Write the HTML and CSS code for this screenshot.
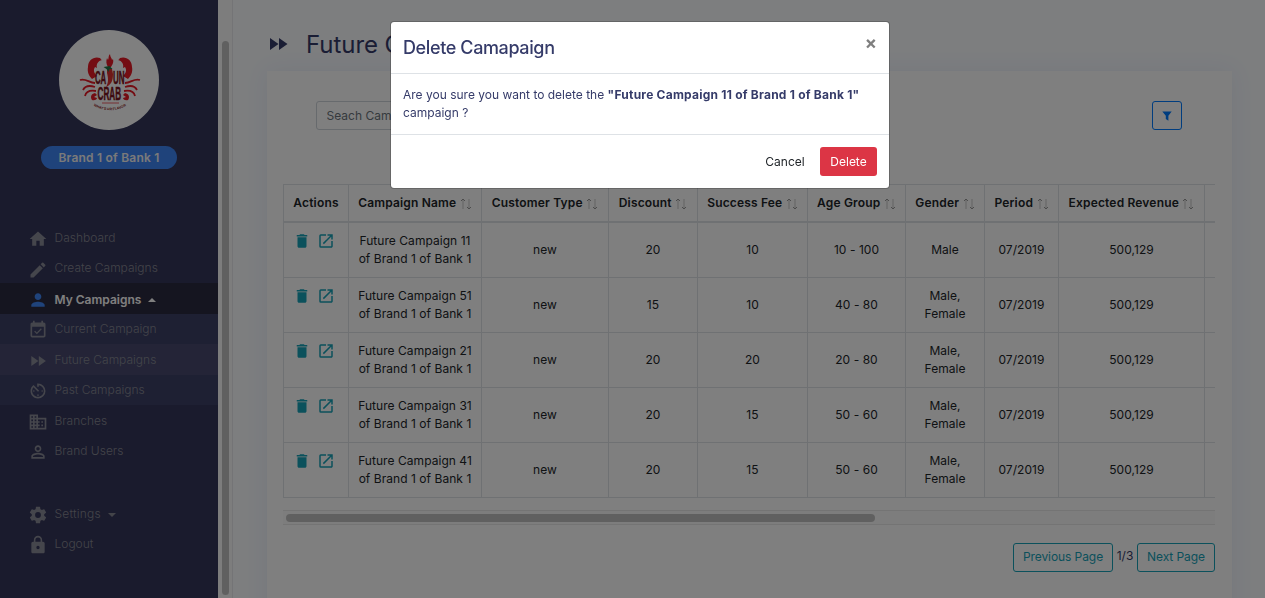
FILE: index.html
```html
<!DOCTYPE html>
<html lang="en">
<head>
<meta charset="utf-8">
<title>Future Campaigns</title>
<link rel="stylesheet" href="styles.css">
</head>
<body>
<svg class="sprite" aria-hidden="true">
  <symbol id="home" viewBox="0 0 24 24"><path d="M10 20v-6h4v6h5v-8h3L12 3 2 12h3v8z"/></symbol>
  <symbol id="edit" viewBox="0 0 24 24"><path d="M3 17.25V21h3.75L17.81 9.94l-3.75-3.75L3 17.25zM20.71 7.04a1 1 0 0 0 0-1.41l-2.34-2.34a1 1 0 0 0-1.41 0l-1.83 1.83 3.75 3.75 1.83-1.83z"/></symbol>
  <symbol id="person" viewBox="0 0 24 24"><path d="M12 12c2.21 0 4-1.79 4-4s-1.79-4-4-4-4 1.79-4 4 1.79 4 4 4zm0 2c-2.67 0-8 1.34-8 4v2h16v-2c0-2.66-5.33-4-8-4z"/></symbol>
  <symbol id="event" viewBox="0 0 24 24"><path d="M16.53 11.06L15.47 10l-4.88 4.88-2.12-2.12-1.06 1.06L10.59 17l5.94-5.94zM19 3h-1V1h-2v2H8V1H6v2H5c-1.11 0-2 .9-2 2v14a2 2 0 0 0 2 2h14c1.1 0 2-.9 2-2V5c0-1.100-.9-2-2-2zm0 16H5V8h14v11z"/></symbol>
  <symbol id="forward" viewBox="0 0 24 24"><path d="M4 18l8.500-6L4 6v12zm9-12v12l8.500-6L13 6z"/></symbol>
  <symbol id="timer" viewBox="0 0 24 24"><path d="M11 17c0 .55.45 1 1 1s1-.45 1-1-.45-1-1-1-1 .45-1 1zm0-14v4h2V5.080c3.390.49 6 3.390 6 6.920 0 3.870-3.130 7-7 7s-7-3.130-7-7c0-1.680.59-3.220 1.580-4.420L12 13l1.410-1.410-6.800-6.800v.02C4.420 6.450 3 9.050 3 12c0 4.970 4.020 9 9 9a9 9 0 0 0 0-18h-1zm7 9c0-.55-.45-1-1-1s-1 .45-1 1 .45 1 1 1 1-.45 1-1zM6 12c0 .55.45 1 1 1s1-.45 1-1-.45-1-1-1-1 .45-1 1z"/></symbol>
  <symbol id="building" viewBox="0 0 24 24"><path d="M12 7V3H2v18h20V7H12zM6 19H4v-2h2v2zm0-4H4v-2h2v2zm0-4H4V9h2v2zm0-4H4V5h2v2zm4 12H8v-2h2v2zm0-4H8v-2h2v2zm0-4H8V9h2v2zm0-4H8V5h2v2zm10 12h-8v-2h2v-2h-2v-2h2v-2h-2V9h8v10zm-2-8h-2v2h2v-2zm0 4h-2v2h2v-2z"/></symbol>
  <symbol id="person-outline" viewBox="0 0 24 24"><path d="M12 5.900a2.100 2.100 0 1 1 0 4.200 2.100 2.100 0 0 1 0-4.200m0 9c2.970 0 6.100 1.460 6.100 2.100v1.100H5.900V17c0-.64 3.130-2.100 6.100-2.100M12 4C9.790 4 8 5.790 8 8s1.790 4 4 4 4-1.790 4-4-1.790-4-4-4zm0 9c-2.670 0-8 1.340-8 4v3h16v-3c0-2.660-5.330-4-8-4z"/></symbol>
  <symbol id="gear" viewBox="0 0 24 24"><path d="M19.430 12.980c.04-.32.07-.64.07-.98s-.03-.66-.07-.98l2.110-1.650c.19-.15.24-.42.12-.64l-2-3.460c-.12-.22-.39-.3-.61-.22l-2.490 1c-.52-.4-1.080-.73-1.690-.98l-.38-2.650A.49.49 0 0 0 14 2h-4c-.25 0-.46.18-.49.42l-.38 2.650c-.61.25-1.170.59-1.690.98l-2.490-1c-.23-.09-.49 0-.61.22l-2 3.460c-.13.22-.07.49.12.64l2.110 1.650c-.04.32-.07.65-.07.98s.03.66.07.98l-2.110 1.650c-.19.15-.24.42-.12.64l2 3.460c.12.22.39.3.61.22l2.490-1c.52.4 1.080.73 1.690.98l.38 2.650c.03.24.24.42.49.42h4c.25 0 .46-.18.49-.42l.38-2.650c.61-.25 1.170-.59 1.690-.98l2.490 1c.23.09.49 0 .61-.22l2-3.460c.12-.22.07-.49-.12-.64l-2.110-1.650zM12 15.500a3.500 3.500 0 1 1 0-7 3.500 3.500 0 0 1 0 7z"/></symbol>
  <symbol id="lock" viewBox="0 0 24 24"><path d="M18 8h-1V6c0-2.760-2.240-5-5-5S7 3.240 7 6v2H6c-1.100 0-2 .9-2 2v10c0 1.100.9 2 2 2h12c1.100 0 2-.9 2-2V10c0-1.100-.9-2-2-2zm-6 9a2 2 0 1 1 0-4 2 2 0 0 1 0 4zm3.100-9H8.900V6a3.100 3.100 0 0 1 6.200 0v2z"/></symbol>
  <symbol id="trash" viewBox="0 0 24 24"><path d="M6 19c0 1.100.9 2 2 2h8c1.100 0 2-.9 2-2V7H6v12zM19 4h-3.500l-1-1h-5l-1 1H5v2h14V4z"/></symbol>
  <symbol id="open" viewBox="0 0 24 24"><path d="M19 19H5V5h7V3H5a2 2 0 0 0-2 2v14a2 2 0 0 0 2 2h14c1.100 0 2-.9 2-2v-7h-2v7zM14 3v2h3.590l-9.830 9.830 1.410 1.410L19 6.410V10h2V3h-7z"/></symbol>
  <symbol id="sort" viewBox="0 0 12 12"><g fill="none" stroke="currentColor"><path d="M3 11V1.500M9 1v9.500" opacity=".55"/><path d="M1 3L3 1l2 2M7 9l2 2 2-2"/></g></symbol>
</svg>

<div class="app">
  <aside class="sidebar">
    <div class="logo">
      <svg viewBox="0 0 100 100" width="100" height="100">
        <g fill="#e81a26">
          <path d="M41 28c-6-2-12 2-12 9-1 5 1 9 4 12l5-3c-3-3-4-6-2-9l2 1c-1-4 1-7 5-8-1 0-1-1-2-2z"/>
          <path d="M61 28c6-2 12 2 12 9 1 5-1 9-4 12l-5-3c3-3 4-6 2-9l-2 1c1-4-1-7-5-8 1 0 1-1 2-2z"/>
          <path d="M51 24c0 3 2 4 2 6l1-1c1 4-1 6-2 8h-3c-2-3-2-6-1-9l1 2c1-2 0-4 2-6z"/>
          <path d="M36 63c-4 1-5 4-3 7 3 1 5-1 5-2l-3-1 3-2zM66 63c4 1 5 4 3 7-3 1-5-1-5-2l3-1-3-2z"/>
        </g>
        <g fill="none" stroke="#e81a26" stroke-width="1.800">
          <path d="M36 53c-6 0-9-5-15-3M36 57c-6-2-10-1-12 3M37 61c-6-1-10 1-11 5"/>
          <path d="M66 53c6 0 9-5 15-3M66 57c6-2 10-1 12 3M65 61c6-1 10 1 11 5"/>
          <path d="M43 73h17" stroke-width=".7"/>
        </g>
        <g class="logo-word">
          <text transform="translate(36 53.700) scale(.41 1)">CA</text>
          <text transform="translate(54 53.700) scale(.42 1)">UN</text>
          <text transform="translate(38.500 69.500) scale(.43 1)">CRAB</text>
        </g>
        <path d="M48 39h5l1 5c0 7-2 11-7 13 3-5 2-10 1-14z" fill="#dd3030"/>
        <path d="M44.500 37l6-1 3 3-3 0-1 3-2-3z" fill="#237545"/>
        <path id="arc" d="M35.500 73.500Q51 82 66.500 73.500" fill="none"/>
        <text class="logo-tag" dy="2.500"><textPath href="#arc" textLength="32">WHAT'S UR FLAVOR</textPath></text>
      </svg>
    </div>
    <div class="brand">Brand 1 of Bank 1</div>
    <nav class="menu">
      <a class="item"><svg><use href="#home"/></svg>Dashboard</a>
      <a class="item low"><svg><use href="#edit"/></svg>Create Campaigns</a>
      <a class="item open"><svg><use href="#person"/></svg>My Campaigns<i class="caret up"></i></a>
      <a class="item sub"><svg><use href="#event"/></svg>Current Campaign</a>
      <a class="item sub current"><svg><use href="#forward"/></svg>Future Campaigns</a>
      <a class="item sub"><svg><use href="#timer"/></svg>Past Campaigns</a>
      <a class="item tall"><svg><use href="#building"/></svg>Branches</a>
      <a class="item"><svg><use href="#person-outline"/></svg>Brand Users</a>
      <a class="item spaced"><svg><use href="#gear"/></svg>Settings<i class="caret"></i></a>
      <a class="item"><svg><use href="#lock"/></svg>Logout</a>
    </nav>
  </aside>
  <div class="side-scroll"><div class="side-thumb"></div></div>
  <main class="main">
    <h1 class="title"><svg><use href="#forward"/></svg>Future Campaigns</h1>
    <section class="card">
      <div class="tools">
        <input class="search" placeholder="Seach Campaign">
        <button class="filter" aria-label="Filter"><svg viewBox="0 0 10 10"><path d="M.3.500h9.400L6.400 4.800v4.900L3.800 8V4.800z"/></svg></button>
      </div>
      <div class="table-wrap">
        <table>
          <colgroup><col class="c1"><col class="c2"><col class="c3"><col class="c4"><col class="c5"><col class="c6"><col class="c7"><col class="c8"><col class="c9"><col class="c10"></colgroup>
          <thead><tr><th>Actions</th><th>Campaign Name<svg><use href="#sort"/></svg></th><th>Customer Type<svg><use href="#sort"/></svg></th><th>Discount<svg><use href="#sort"/></svg></th><th>Success Fee<svg><use href="#sort"/></svg></th><th>Age Group<svg><use href="#sort"/></svg></th><th>Gender<svg><use href="#sort"/></svg></th><th>Period<svg><use href="#sort"/></svg></th><th>Expected Revenue<svg><use href="#sort"/></svg></th><th></th></tr></thead>
          <tbody>
            <tr><td class="actions"><svg><use href="#trash"/></svg><svg><use href="#open"/></svg></td><td>Future Campaign 11<br>of Brand 1 of Bank 1</td><td>new</td><td>20</td><td>10</td><td>10 - 100</td><td>Male</td><td>07/2019</td><td>500,129</td><td></td></tr>
            <tr><td class="actions"><svg><use href="#trash"/></svg><svg><use href="#open"/></svg></td><td>Future Campaign 51<br>of Brand 1 of Bank 1</td><td>new</td><td>15</td><td>10</td><td>40 - 80</td><td>Male,<br>Female</td><td>07/2019</td><td>500,129</td><td></td></tr>
            <tr><td class="actions"><svg><use href="#trash"/></svg><svg><use href="#open"/></svg></td><td>Future Campaign 21<br>of Brand 1 of Bank 1</td><td>new</td><td>20</td><td>20</td><td>20 - 80</td><td>Male,<br>Female</td><td>07/2019</td><td>500,129</td><td></td></tr>
            <tr><td class="actions"><svg><use href="#trash"/></svg><svg><use href="#open"/></svg></td><td>Future Campaign 31<br>of Brand 1 of Bank 1</td><td>new</td><td>20</td><td>15</td><td>50 - 60</td><td>Male,<br>Female</td><td>07/2019</td><td>500,129</td><td></td></tr>
            <tr><td class="actions"><svg><use href="#trash"/></svg><svg><use href="#open"/></svg></td><td>Future Campaign 41<br>of Brand 1 of Bank 1</td><td>new</td><td>20</td><td>15</td><td>50 - 60</td><td>Male,<br>Female</td><td>07/2019</td><td>500,129</td><td></td></tr>
          </tbody>
        </table>
      </div>
      <div class="x-scroll"><div class="x-thumb"></div></div>
      <div class="pager"><button class="page-btn prev">Previous Page</button><span>1/3</span><button class="page-btn next">Next Page</button></div>
    </section>
  </main>
</div>

<div class="backdrop">
  <div class="modal" role="dialog">
    <header class="modal-head"><h2>Delete Camapaign</h2><span class="close">×</span></header>
    <div class="modal-body">Are you sure you want to delete the <b>"Future Campaign 11 of Brand 1 of Bank 1"</b><br>campaign ?</div>
    <footer class="modal-foot"><button class="cancel">Cancel</button><button class="delete">Delete</button></footer>
  </div>
</div>
</body>
</html>
```
FILE: styles.css
```css
* { box-sizing: border-box; }
html, body { height: 100%; overflow: hidden; }
body {
  margin: 0;
  font: 12px/18px Inter, "Liberation Sans", sans-serif;
  letter-spacing: 0;
  color: #353b69;
}
button, input { font: inherit; letter-spacing: inherit; }
svg { fill: currentColor; }
.sprite { position: absolute; width: 0; height: 0; }

.app { display: flex; height: 598px; overflow: hidden; }

/* Sidebar */
.sidebar { width: 218px; flex: none; background: #34365a; padding-top: 30px; }
.logo { width: 100px; height: 100px; margin: 0 auto; border-radius: 50%; background: #fff; overflow: hidden; }
.logo svg { display: block; }
.logo-word { font: bold 19px "Liberation Sans", sans-serif; fill: #7b1420; stroke: #7b1420; stroke-width: .5px; }
.logo-tag { font: bold 3.500px "Liberation Sans", sans-serif; fill: #8a1822; }
.brand {
  width: 136px; height: 23px; margin: 16px auto 54px; border-radius: 12px;
  background: #3f86f7; color: #f4f4f4; font-weight: 600; line-height: 23px; text-align: center; letter-spacing: .22px;
}
.item { display: flex; align-items: center; height: 30px; padding-left: 28px; color: #878893; font-weight: 300; }
.item svg { width: 20px; height: 20px; margin: 2px 6.500px 0 0; color: #8b8c98; }
.item.low svg { margin-top: 4px; }
.item.open { height: 31px; padding-top: 2px; background: #2b2b41; color: #fff; font-weight: 600; }
.item.open svg { margin-top: 0; color: #3f86f7; }
.item.sub { background: #3c4067; }
.item.current { height: 31px; background: #48496f; }
.item.tall { height: 31px; }
.item.spaced { margin-top: 33px; letter-spacing: .2px; }
.caret { margin: 2px 0 0 7px; border: 4px solid transparent; border-bottom: 0; border-top-color: currentColor; }
.caret.up { margin-top: 0; border-bottom: 4px solid currentColor; border-top: 0; }

.side-scroll { width: 15px; flex: none; padding: 41px 3px 3px 4px; background: #fafafa; border-right: 1px solid #e9e9ed; }
.side-thumb { height: 554px; border-radius: 4px; background: #c1c1c1; }

/* Page content */
.main { flex: 1; min-width: 0; padding: 31px 33px 0 34px; background: #fafcff; }
.title { display: flex; align-items: center; height: 28px; margin: 0 0 12px; font-size: 24px; font-weight: 400; letter-spacing: -.05px; white-space: nowrap; }
.title svg { width: 24px; height: 24px; margin: -2px 16px 0 -1px; }
.card { height: 560px; padding: 30px 17px 0 16px; background: #fff; box-shadow: 0 0 22px #e9effa; }
.tools { display: flex; justify-content: space-between; padding: 0 33px; height: 83px; align-items: flex-start; }
.search { width: 240px; height: 29px; padding: 0 9.500px; border: 1px solid #ced4da; border-radius: 3px; background: #fff; }
.search::placeholder { color: #6c757d; opacity: 1; }
.filter { display: grid; place-items: center; width: 30px; height: 29px; padding: 0; border: 1px solid #007bff; border-radius: 3px; background: none; color: #007bff; }
.filter svg { width: 10px; height: 10px; }

.table-wrap { height: 314px; overflow: hidden; }
table { width: 1040px; table-layout: fixed; border-collapse: separate; border-spacing: 0; color: #212529; }
th, td { padding: 0; text-align: center; border: 0 solid #dee2e6; border-left-width: 1px; border-bottom-width: 1px; }
th { height: 39px; border-top-width: 1px; border-bottom-width: 2px; font-weight: 600; white-space: nowrap; letter-spacing: .17px; }
th svg { width: 12px; height: 12px; margin: 0 0 -3px 3.500px; color: #999; }
td { height: 55px; letter-spacing: .05px; }
.c1 { width: 65px; } .c2 { width: 133px; } .c3 { width: 127px; } .c4 { width: 89px; } .c5 { width: 110px; }
.c6 { width: 98px; } .c7 { width: 79px; } .c8 { width: 74px; } .c9 { width: 146px; } .c10 { width: 119px; }
.actions { vertical-align: top; padding: 9px 4px 0 0; color: #17a2b8; line-height: 0; }
.actions svg { width: 18px; height: 18px; margin: 0 3px; }

.x-scroll { height: 15px; margin-top: 12px; padding: 3px; background: #fafafa; border: solid #e8e8e8; border-width: 1px 0; }
.x-thumb { width: 589px; height: 8px; border-radius: 4px; background: #c1c1c1; }
.pager { display: flex; justify-content: flex-end; margin-top: 18px; line-height: 26px; }
.pager span { width: 24px; text-align: center; }
.page-btn { height: 29px; padding: 0 0 1px; border: 1px solid #17a2b8; border-radius: 3px; background: none; color: #17a2b8; letter-spacing: -.08px; }
.prev { width: 100px; }
.next { width: 78px; }

/* Confirmation dialog */
.backdrop { position: fixed; inset: 0; padding: 21px 0 0 390px; background: rgba(0, 0, 0, .5); }
.modal { width: 500px; height: 168px; background: #fff; background-clip: padding-box; border: 1px solid rgba(0, 0, 0, .2); border-radius: 4px; }
.modal-head { display: flex; justify-content: space-between; height: 52px; padding: 13px 12px 0; border-bottom: 1px solid #dee2e6; }
.modal-head h2 { margin: 0; font-size: 18px; line-height: 26px; font-weight: 500; letter-spacing: -.38px; }
.close { font-size: 18px; line-height: 15px; font-weight: 700; color: #7f7f7f; }
.modal-body { height: 60px; padding: 12px; white-space: nowrap; }
.modal-body b { letter-spacing: .23px; }
.modal-foot { display: flex; justify-content: flex-end; padding: 12px; border-top: 1px solid #dee2e6; }
.modal-foot button { height: 29px; padding: 0; border: 0; border-radius: 3px; }
.cancel { width: 60px; margin-right: 5px; background: none; color: #212529; }
.delete { width: 57px; background: #dc3545; color: #fff; }
```
